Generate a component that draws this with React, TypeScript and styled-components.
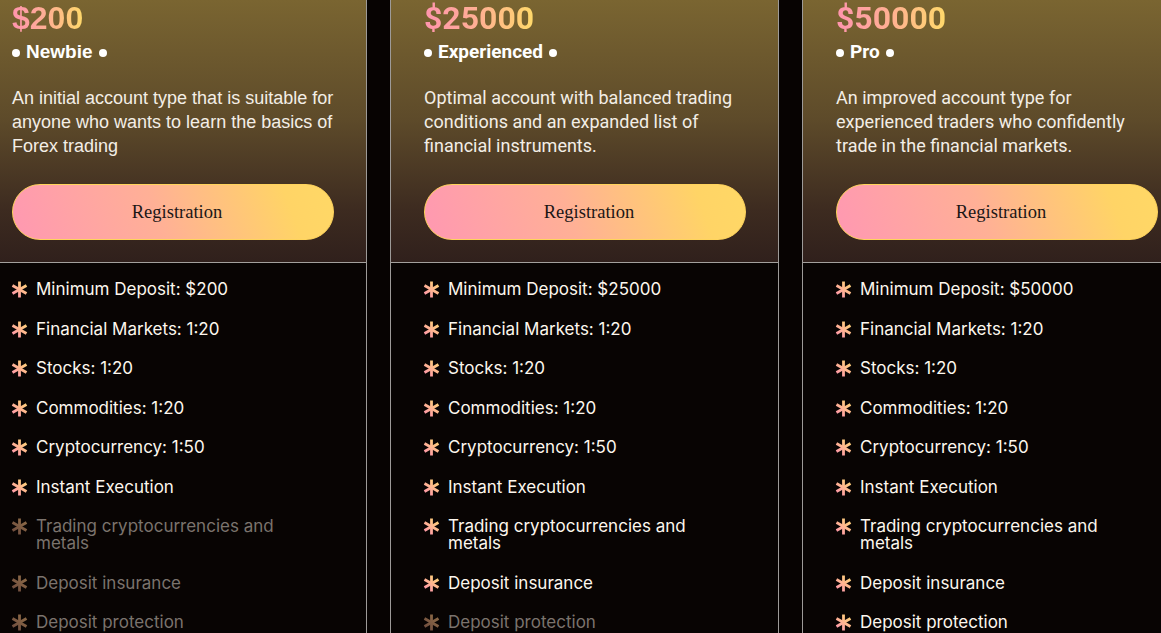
import React from 'react';
import styled, { createGlobalStyle } from 'styled-components';

const GlobalStyle = createGlobalStyle`
  html, body {
    margin: 0;
    padding: 0;
    background: #070302;
    overflow: hidden;
  }
`;

const Row = styled.div`
  display: flex;
  gap: 23px;
  margin-left: -22px;
  width: max-content;
`;

const Card = styled.div`
  width: 389px;
  box-sizing: border-box;
  border-left: 1px solid #9d9a98;
  border-right: 1px solid #9d9a98;
  display: flex;
  flex-direction: column;
`;

const Head = styled.div<{ $font: string }>`
  padding: 0 32px 22px 33px;
  height: 263px;
  box-sizing: border-box;
  border-bottom: 1px solid #a3a09d;
  background: linear-gradient(180deg, #7a6531 0%, #5e4b2a 45%, #3d2b20 80%, #30201c 100%);
  font-family: ${(p) => p.$font};
  display: flex;
  flex-direction: column;
`;

const Price = styled.div`
  font-size: 32px;
  font-weight: 700;
  line-height: 36px;
  background: linear-gradient(90deg, #ff94ae 0%, #ffb092 50%, #ffd96a 100%);
  -webkit-background-clip: text;
  background-clip: text;
  color: transparent;
  width: max-content;
`;

const Tier = styled.div`
  display: flex;
  align-items: center;
  gap: 6px;
  margin-top: 2px;
  font-size: 19px;
  font-weight: 700;
  line-height: 28px;
  color: #ffffff;
`;

const Dot = styled.span`
  width: 8px;
  height: 8px;
  border-radius: 50%;
  background: #ffffff;
  margin-top: 2px;
`;

const Desc = styled.p`
  margin: 20px 0 0;
  font-size: 18px;
  line-height: 24px;
  color: #f3eee6;
`;

const Button = styled.button`
  margin-top: auto;
  height: 56px;
  width: 100%;
  border-radius: 28px;
  border: 1px solid #ffd45c;
  padding: 0 0 0 8px;
  background: linear-gradient(70deg, #ff98b2 0%, #ffb096 45%, #ffd466 85%, #ffd866 100%);
  font-family: 'Liberation Serif', serif;
  font-size: 18.5px;
  color: #1b1616;
  cursor: pointer;
`;

const Features = styled.ul`
  list-style: none;
  margin: 0;
  padding: 18px 32px 40px 33px;
  display: flex;
  flex-direction: column;
  gap: 22.5px;
  background: #080403;
`;

const Feature = styled.li<{ $off?: boolean }>`
  display: flex;
  align-items: flex-start;
  gap: 8px;
  font-family: 'Inter', 'Lato', sans-serif;
  font-size: 17px;
  line-height: 17px;
  color: ${(p) => (p.$off ? '#7b736d' : '#fdf7ee')};
  max-width: 285px;
`;

const StarWrap = styled.span`
  flex: none;
  width: 17px;
  height: 17px;
  margin-left: -1px;
  display: flex;
`;

function Star({ off, id }: { off?: boolean; id: string }) {
  const a = off ? '#6d4a3d' : '#ff93ae';
  const b = off ? '#8f6d48' : '#ffd774';
  return (
    <StarWrap>
      <svg width="17" height="17" viewBox="0 0 17 17">
        <defs>
          <linearGradient id={id} gradientUnits="userSpaceOnUse" x1="2" y1="16" x2="15" y2="1">
            <stop offset="0" stopColor={a} />
            <stop offset="1" stopColor={b} />
          </linearGradient>
        </defs>
        <g stroke={`url(#${id})`} strokeWidth="2.8" strokeLinecap="butt">
          <line x1="8.5" y1="0.5" x2="8.5" y2="16.5" />
          <line x1="1.5" y1="4.5" x2="15.5" y2="12.5" />
          <line x1="1.5" y1="12.5" x2="15.5" y2="4.5" />
        </g>
      </svg>
    </StarWrap>
  );
}

type Plan = {
  price: string;
  tier: string;
  desc: string;
  font: string;
  deposit: string;
  enabled: number;
};

const plans: Plan[] = [
  {
    price: '$200',
    tier: 'Newbie',
    desc: 'An initial account type that is suitable for anyone who wants to learn the basics of Forex trading',
    font: "'Liberation Sans', Arial, sans-serif",
    deposit: '$200',
    enabled: 6,
  },
  {
    price: '$25000',
    tier: 'Experienced',
    desc: 'Optimal account with balanced trading conditions and an expanded list of financial instruments.',
    font: "Roboto, 'Liberation Sans', sans-serif",
    deposit: '$25000',
    enabled: 8,
  },
  {
    price: '$50000',
    tier: 'Pro',
    desc: 'An improved account type for experienced traders who confidently trade in the financial markets.',
    font: "Roboto, 'Liberation Sans', sans-serif",
    deposit: '$50000',
    enabled: 9,
  },
];

export default function App() {
  return (
    <>
      <GlobalStyle />
      <Row>
        {plans.map((p, i) => {
          const items = [
            `Minimum Deposit: ${p.deposit}`,
            'Financial Markets: 1:20',
            'Stocks: 1:20',
            'Commodities: 1:20',
            'Cryptocurrency: 1:50',
            'Instant Execution',
            'Trading cryptocurrencies and metals',
            'Deposit insurance',
            'Deposit protection',
          ];
          return (
            <Card key={p.tier}>
              <Head $font={p.font}>
                <Price>{p.price}</Price>
                <Tier>
                  <Dot />
                  {p.tier}
                  <Dot />
                </Tier>
                <Desc>{p.desc}</Desc>
                <Button>Registration</Button>
              </Head>
              <Features>
                {items.map((t, j) => (
                  <Feature key={t} $off={j >= p.enabled}>
                    <Star off={j >= p.enabled} id={`s${i}-${j}`} />
                    {t}
                  </Feature>
                ))}
              </Features>
            </Card>
          );
        })}
      </Row>
    </>
  );
}
